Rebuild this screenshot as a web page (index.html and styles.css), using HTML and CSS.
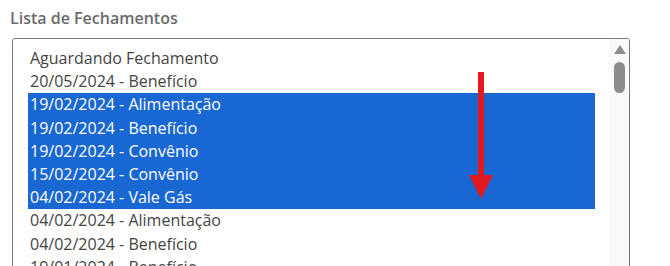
FILE: index.html
```html
<!DOCTYPE html>
<html lang="pt-BR">
<head>
    <meta charset="UTF-8">
    <title>Lista de Fechamentos</title>
    <link rel="stylesheet" href="styles.css">
</head>
<body>
    <label class="field-label">Lista de Fechamentos</label>

    <div class="list-box">
        <ul class="options">
            <li>Aguardando Fechamento</li>
            <li>20/05/2024 - Benefício</li>
            <li class="selected">19/02/2024 - Alimentação</li>
            <li class="selected">19/02/2024 - Benefício</li>
            <li class="selected">19/02/2024 - Convênio</li>
            <li class="selected">15/02/2024 - Convênio</li>
            <li class="selected">04/02/2024 - Vale Gás</li>
            <li>04/02/2024 - Alimentação</li>
            <li>04/02/2024 - Benefício</li>
            <li>19/01/2024 - Benefício</li>
            <li>19/01/2024 - Alimentação</li>
        </ul>

        <!-- barra de rolagem -->
        <div class="scroll-track">
            <div class="scroll-up"></div>
            <div class="scroll-thumb"></div>
        </div>

        <!-- seta vermelha por cima da seleção -->
        <svg class="drag-arrow" width="30" height="130" viewBox="0 0 30 130">
            <rect x="12" y="0" width="6" height="106" fill="#e21b22"/>
            <polygon points="3,103 27,103 15,127" fill="#e21b22"/>
        </svg>
    </div>
</body>
</html>
```

FILE: styles.css
```css
body {
    margin: 0;
    font-family: "Open Sans", Arial, sans-serif;
    background-color: #ffffff;
    overflow: hidden;
}

.field-label {
    display: block;
    padding: 7px 0 0 10px;
    height: 31px;
    font-size: 16px;
    font-weight: 600;
    color: #6b6b6b;
}

.list-box {
    position: relative;
    display: flex;
    margin-left: 12px;
    width: 616px;
    height: 300px;
    border: 1px solid #7a7a7a;
    border-radius: 3px;
    overflow: hidden;
}

.options {
    flex: 1;
    list-style: none;
    margin: 0;
    padding: 8px 15px 0 15px;
    font-size: 16px;
    color: #444444;
}

.options li {
    height: 23.2px;
    line-height: 23.2px;
    padding: 0 2px;
    white-space: nowrap;
}

.options li.selected {
    background-color: #1967d2;
    color: #ffffff;
}

.scroll-track {
    width: 19px;
    background-color: #fafafa;
    display: flex;
    flex-direction: column;
    align-items: center;
}

.scroll-up {
    margin-top: 6px;
    width: 0;
    height: 0;
    border-left: 6.5px solid transparent;
    border-right: 6.5px solid transparent;
    border-bottom: 9px solid #8c8c8c;
}

.scroll-thumb {
    margin-top: 8px;
    width: 11px;
    height: 31px;
    border-radius: 6px;
    background-color: #8c8c8c;
}

.drag-arrow {
    position: absolute;
    left: 453px;
    top: 33px;
}
```
